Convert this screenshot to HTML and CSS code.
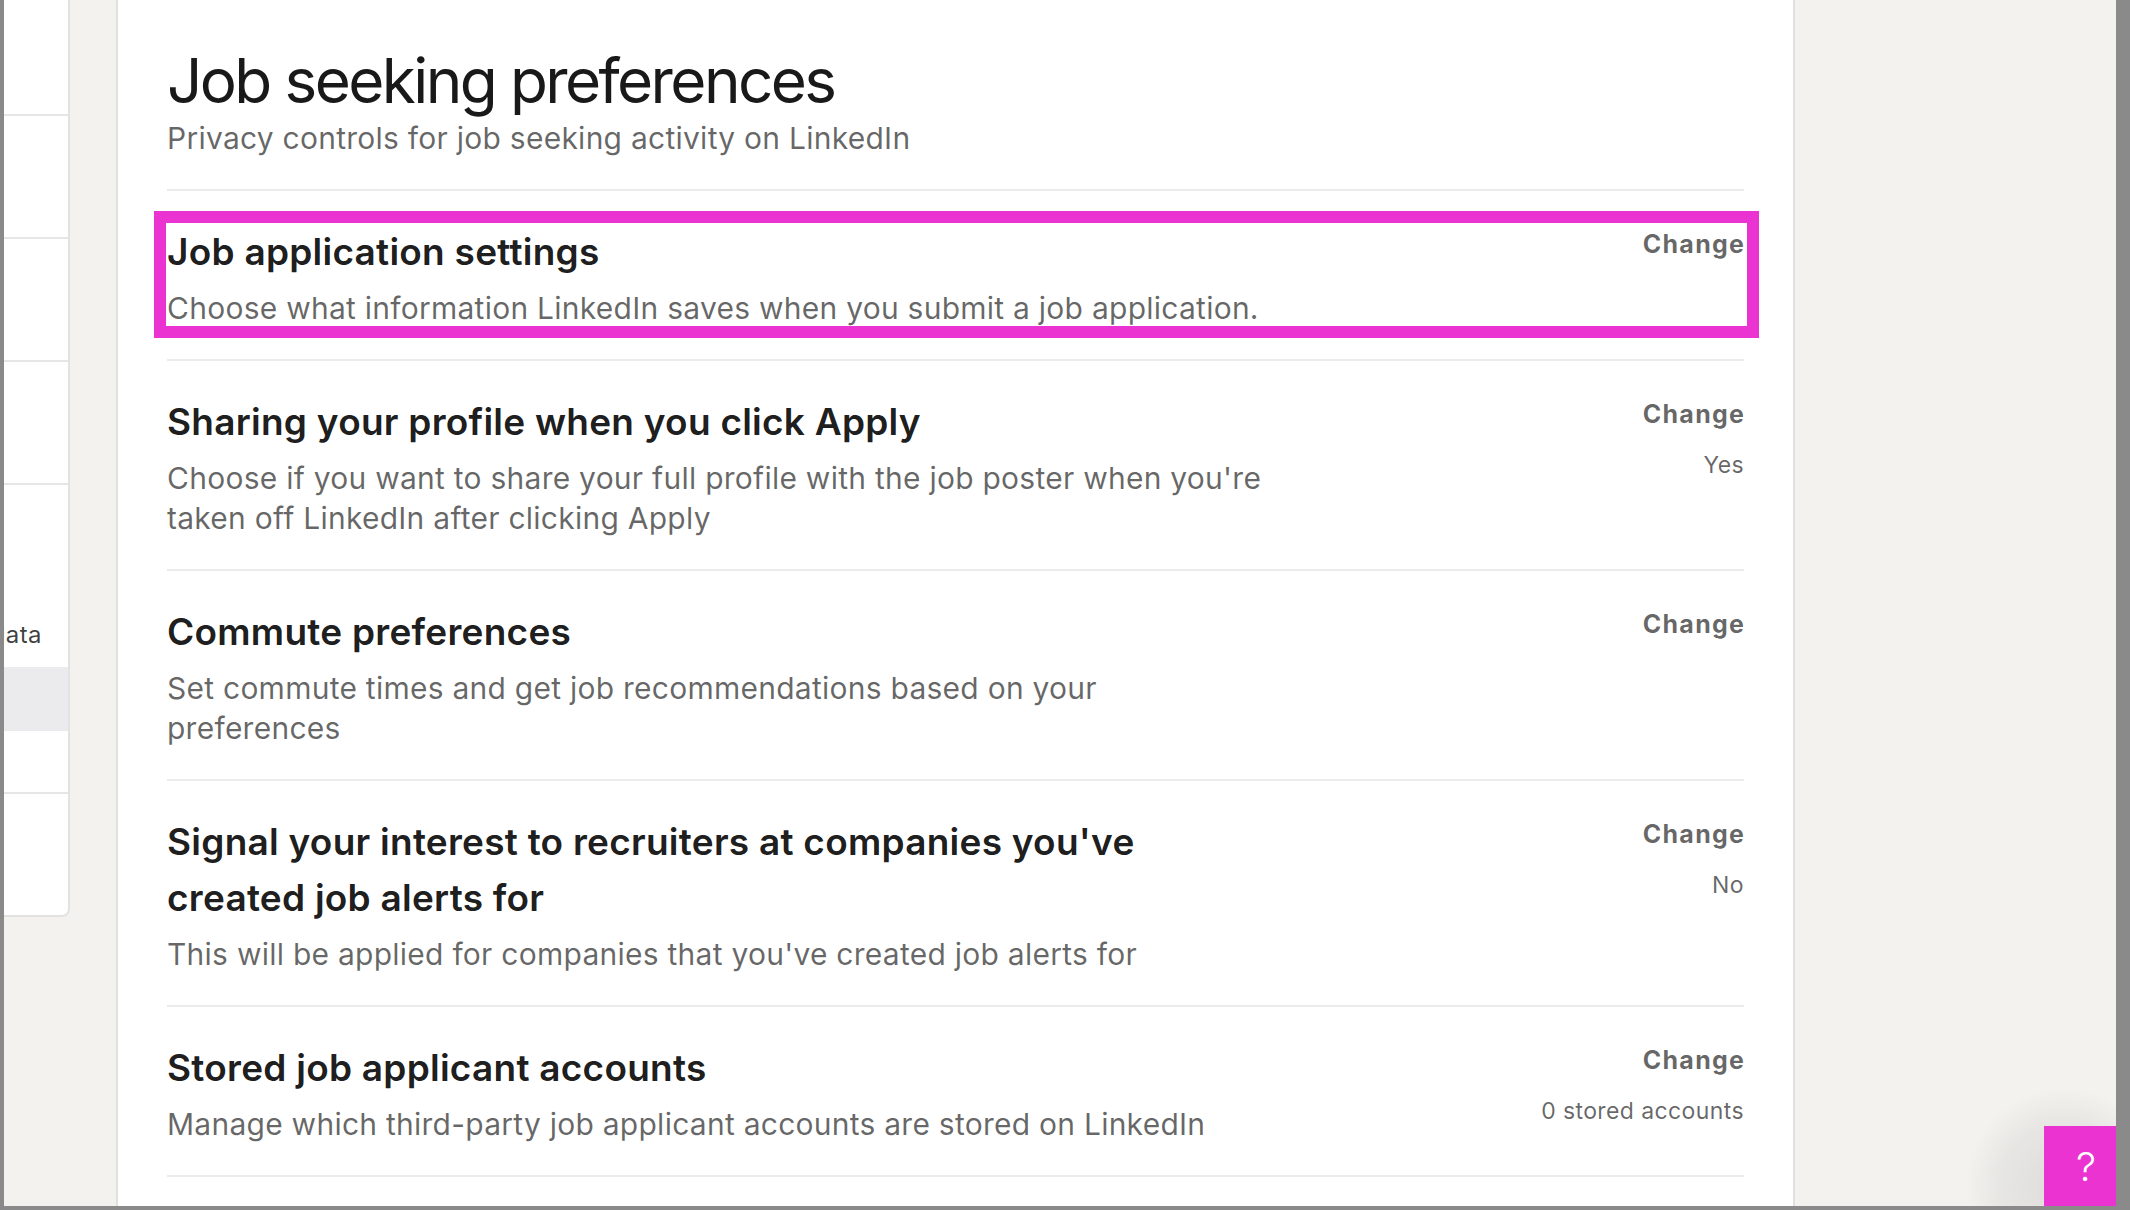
FILE: index.html
```html
<!DOCTYPE html>
<html lang="en">
<head>
<meta charset="utf-8">
<title>Job seeking preferences</title>
<link rel="stylesheet" href="styles.css">
</head>
<body>
<div class="screen">
  <nav class="sidenav">
    <div class="nav-row"></div>
    <div class="nav-row"></div>
    <div class="nav-row"></div>
    <div class="nav-row"></div>
    <div class="nav-group">
      <div class="nav-label"><span>Advertising data</span></div>
      <div class="nav-sub active"></div>
    </div>
    <div class="nav-row last"></div>
  </nav>

  <main class="card">
    <header class="card-header">
      <h1>Job seeking preferences</h1>
      <p class="subtitle">Privacy controls for job seeking activity on LinkedIn</p>
    </header>

    <section class="setting highlighted">
      <div class="setting-text">
        <h2>Job application settings</h2>
        <p class="desc">Choose what information LinkedIn saves when you submit a job application.</p>
      </div>
      <div class="setting-action">
        <a class="change">Change</a>
      </div>
      <span class="annotation"></span>
    </section>

    <section class="setting">
      <div class="setting-text">
        <h2>Sharing your profile when you click Apply</h2>
        <p class="desc">Choose if you want to share your full profile with the job poster when you're<br>taken off LinkedIn after clicking Apply</p>
      </div>
      <div class="setting-action">
        <a class="change">Change</a>
        <span class="value">Yes</span>
      </div>
    </section>

    <section class="setting">
      <div class="setting-text">
        <h2>Commute preferences</h2>
        <p class="desc">Set commute times and get job recommendations based on your<br>preferences</p>
      </div>
      <div class="setting-action">
        <a class="change">Change</a>
      </div>
    </section>

    <section class="setting">
      <div class="setting-text">
        <h2>Signal your interest to recruiters at companies you've<br>created job alerts for</h2>
        <p class="desc">This will be applied for companies that you've created job alerts for</p>
      </div>
      <div class="setting-action">
        <a class="change">Change</a>
        <span class="value">No</span>
      </div>
    </section>

    <section class="setting">
      <div class="setting-text">
        <h2>Stored job applicant accounts</h2>
        <p class="desc">Manage which third-party job applicant accounts are stored on LinkedIn</p>
      </div>
      <div class="setting-action">
        <a class="change">Change</a>
        <span class="value">0 stored accounts</span>
      </div>
    </section>
  </main>

  <div class="help">
    <span class="help-shadow"></span>
    <button class="help-btn" type="button">?</button>
  </div>
</div>
</body>
</html>
```

FILE: styles.css
```css
* { box-sizing: border-box; }

html, body {
  margin: 0;
  padding: 0;
  height: 100%;
}

body {
  background: #8a8a8a;
  font-family: Inter, "Liberation Sans", Arial, sans-serif;
  color: rgba(0, 0, 0, 0.9);
}

.screen {
  position: relative;
  height: 1210px;
  width: 2130px;
  overflow: hidden;
  background: #f3f2ef;
  border-left: 4px solid #8a8a8a;
  border-right: 14px solid #8a8a8a;
  border-bottom: 4px solid #8a8a8a;
  display: flex;
  align-items: flex-start;
  gap: 46px;
}

/* left navigation (mostly scrolled out of view) */
.sidenav {
  flex: 0 0 66px;
  width: 66px;
  min-width: 0;
  height: 917px;
  background: #fff;
  border-right: 2px solid #e2e2e2;
  border-bottom: 2px solid #e2e2e2;
  border-bottom-right-radius: 8px;
  display: flex;
  flex-direction: column;
  overflow: hidden;
}

.nav-row {
  height: 123px;
  border-bottom: 2px solid #e6e6e6;
  flex: 0 0 auto;
}

.nav-row:first-child {
  height: 116px;
}

.nav-row.last {
  border-bottom: none;
  flex: 1 1 auto;
}

.nav-group {
  height: 313px;
  border-bottom: 2px solid #e6e6e6;
  display: flex;
  flex-direction: column;
  padding-top: 132px;
  min-width: 0;
}

.nav-label {
  display: flex;
  justify-content: flex-end;
  overflow: hidden;
  white-space: nowrap;
  min-width: 0;
  padding-right: 26px;
  font-family: Inter, "Liberation Sans", Arial, sans-serif;
  font-size: 24px;
  line-height: 36px;
  letter-spacing: 0.4px;
  color: rgba(0, 0, 0, 0.75);
}

.nav-label span { flex: 0 0 auto; }

.nav-sub {
  margin-top: 14px;
  height: 64px;
}

.nav-sub.active {
  background: #ebebed;
}

/* main settings card */
.card {
  flex: 0 0 1679px;
  min-height: 1300px;
  background: #fff;
  border-left: 2px solid #e0e0e0;
  border-right: 2px solid #e0e0e0;
  padding: 44px 49px 0 49px;
}

.card-header {
  border-bottom: 2px solid #ebebeb;
  padding-bottom: 31px;
}

h1 {
  margin: 0;
  font-size: 62px;
  line-height: 74px;
  font-weight: 400;
  letter-spacing: -2.6px;
  color: rgba(0, 0, 0, 0.9);
}

.subtitle {
  margin: 0;
  font-size: 30px;
  line-height: 40px;
  letter-spacing: 0.25px;
  color: rgba(0, 0, 0, 0.6);
}

.setting {
  position: relative;
  display: flex;
  justify-content: space-between;
  align-items: flex-start;
  padding: 33px 0 31px;
  border-bottom: 2px solid #ebebeb;
}

.setting-text {
  flex: 1 1 auto;
}

h2 {
  margin: 0;
  font-size: 37px;
  line-height: 56px;
  font-weight: 600;
  letter-spacing: 0.25px;
  color: rgba(0, 0, 0, 0.9);
}

.desc {
  margin: 8px 0 0;
  font-size: 30px;
  line-height: 40px;
  letter-spacing: 0.25px;
  color: rgba(0, 0, 0, 0.6);
}

.setting-action {
  flex: 0 0 auto;
  display: flex;
  flex-direction: column;
  align-items: flex-end;
  padding-top: 4px;
}

.change {
  font-size: 25px;
  line-height: 32px;
  font-weight: 700;
  letter-spacing: 1.3px;
  margin-right: -1.3px;
  color: rgba(0, 0, 0, 0.6);
  cursor: pointer;
}

.value {
  margin-top: 19px;
  font-size: 23px;
  line-height: 32px;
  letter-spacing: 0.4px;
  color: rgba(0, 0, 0, 0.6);
}

/* magenta annotation frame */
.annotation {
  position: absolute;
  top: 20px;
  left: -13px;
  right: -15px;
  bottom: 21px;
  border: 12px solid #ea33d0;
  pointer-events: none;
}

/* help button */
.help {
  position: absolute;
  left: 2040px;
  top: 1126px;
  width: 84px;
  height: 84px;
}

.help-shadow {
  position: absolute;
  left: -80px;
  top: -40px;
  width: 200px;
  height: 200px;
  border-radius: 50%;
  background: radial-gradient(circle, rgba(0,0,0,0.09) 0%, rgba(0,0,0,0.05) 45%, rgba(0,0,0,0) 70%);
}

.help-btn {
  position: relative;
  display: flex;
  align-items: center;
  justify-content: center;
  width: 84px;
  height: 84px;
  border: none;
  padding: 0 0 4px;
  margin: 0;
  background: #ea33d0;
  color: #fff;
  font-family: Inter, "Liberation Sans", sans-serif;
  font-size: 40px;
  font-weight: 300;
}
```
